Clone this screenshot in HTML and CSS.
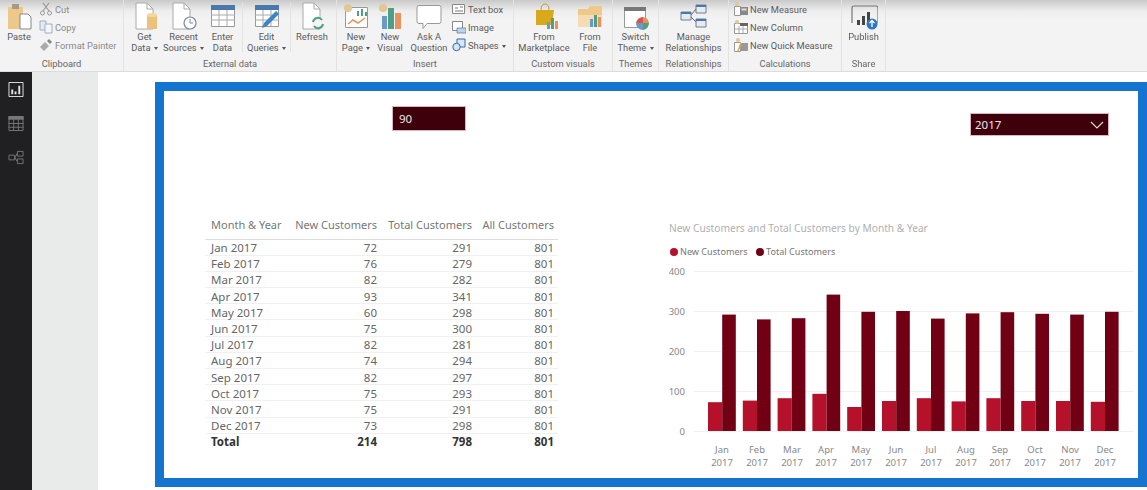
FILE: index.html
```html
<!DOCTYPE html>
<html lang="en">
<head>
    <meta charset="UTF-8">
    <meta name="viewport" content="width=device-width, initial-scale=1.0">
    <title>Power BI Desktop</title>
    <link rel="stylesheet" href="styles.css">
</head>
<body>
    <!-- Ribbon -->
    <div class="ribbon">
        <div class="group group-clipboard">
            <div class="tools">
                <div class="btn btn-paste">
                    <svg class="icon" viewBox="0 0 28 28"><path d="M3 5h15v22H3z" fill="#ecc98a"/><path d="M7 2h7v5H7z" fill="#a89a80"/><path d="M15 12h8l3 3v12H15z" fill="#fff" stroke="#888"/></svg>
                    <span>Paste</span>
                </div>
                <div class="list">
                    <div class="list-item muted">
                        <svg class="mini" viewBox="0 0 14 14"><path d="M4 1l6 8M10 1L4 9" stroke="#999" stroke-width="1.2" fill="none"/><circle cx="3.500" cy="11" r="2" fill="none" stroke="#999"/><circle cx="10.500" cy="11" r="2" fill="none" stroke="#999"/></svg>
                        <span>Cut</span>
                    </div>
                    <div class="list-item muted">
                        <svg class="mini" viewBox="0 0 14 14"><path d="M1 1h6v9H1z" fill="#e4eaf0" stroke="#9db0c4"/><path d="M6 4h7v9H6z" fill="#f4f6f8" stroke="#9db0c4"/></svg>
                        <span>Copy</span>
                    </div>
                    <div class="list-item muted">
                        <svg class="mini" viewBox="0 0 14 14"><path d="M1 9l5-5 4 4-5 5z" fill="#aaa"/><path d="M8 3l2-2 3 3-2 2z" fill="#888"/></svg>
                        <span>Format Painter</span>
                    </div>
                </div>
            </div>
            <div class="group-name">Clipboard</div>
        </div>

        <div class="group group-data">
            <div class="tools">
                <div class="btn btn-get">
                    <svg class="icon" viewBox="0 0 28 28"><path d="M5 1h11l6 6v20H5z" fill="#fff" stroke="#aaa"/><path d="M16 1v6h6" fill="none" stroke="#aaa"/><path d="M16 13h10v14H16z" fill="#ecc27a"/><ellipse cx="21" cy="13" rx="5" ry="2" fill="#f3d9a0"/></svg>
                    <span>Get<br>Data <i class="caret"></i></span>
                </div>
                <div class="btn btn-recent">
                    <svg class="icon" viewBox="0 0 28 28"><path d="M3 1h11l6 6v20H3z" fill="#fff" stroke="#aaa"/><path d="M14 1v6h6" fill="none" stroke="#aaa"/><circle cx="20" cy="21" r="6" fill="#fff" stroke="#7a8a9a" stroke-width="1.200"/><path d="M20 17v4h3" fill="none" stroke="#7a8a9a"/></svg>
                    <span>Recent<br>Sources <i class="caret"></i></span>
                </div>
                <div class="btn btn-enter">
                    <svg class="icon" viewBox="0 0 28 28"><path d="M2.500 3.500h23v21h-23z" fill="#fff" stroke="#999"/><path d="M2 3h24v5H2z" fill="#4a78ad"/><path d="M2 13h24M2 18h24M10 8v16M18 8v16" stroke="#aaa" fill="none"/></svg>
                    <span>Enter<br>Data</span>
                </div>
                <div class="sep"></div>
                <div class="btn btn-edit">
                    <svg class="icon" viewBox="0 0 28 28"><path d="M2.500 3.500h23v21h-23z" fill="#fff" stroke="#999"/><path d="M2 3h24v5H2z" fill="#4a78ad"/><path d="M2 13h24M2 18h24M10 8v16M18 8v16" stroke="#aaa" fill="none"/><path d="M9 26l2-5 12-12 3 3-12 12z" fill="#3d86c6"/></svg>
                    <span>Edit<br>Queries <i class="caret"></i></span>
                </div>
                <div class="sep"></div>
                <div class="btn btn-refresh">
                    <svg class="icon" viewBox="0 0 28 28"><path d="M5 1h11l6 6v20H5z" fill="#fff" stroke="#aaa"/><path d="M16 1v6h6" fill="none" stroke="#aaa"/><circle cx="20" cy="21" r="6" fill="#f4f4f4"/><path d="M15 20a5 5 0 0 1 9-2M25 22a5 5 0 0 1-9 2" fill="none" stroke="#4f9e86" stroke-width="2"/></svg>
                    <span>Refresh</span>
                </div>
            </div>
            <div class="group-name">External data</div>
        </div>

        <div class="group group-insert">
            <div class="tools">
                <div class="btn btn-page">
                    <svg class="icon" viewBox="0 0 28 28"><path d="M3.500 5.500h22v20h-22z" fill="#fff" stroke="#999"/><circle cx="6" cy="6" r="4" fill="#e3c691"/><path d="M15 14v-5h2v5zM19 14v-7h2v7zM23 14v-4h2v4z" fill="#4f9e86"/><path d="M6 22l5-4 5 3 7-5" fill="none" stroke="#e8935a" stroke-width="1.500"/></svg>
                    <span>New<br>Page <i class="caret"></i></span>
                </div>
                <div class="btn btn-visual">
                    <svg class="icon" viewBox="0 0 28 28"><circle cx="7" cy="6" r="4" fill="#e3c691"/><path d="M6 14h5v13H6z" fill="#6a9bc3"/><path d="M12 6h6v21h-6z" fill="#4f9e86"/><path d="M19 11h6v16h-6z" fill="#e8935a"/></svg>
                    <span>New<br>Visual</span>
                </div>
                <div class="btn btn-ask">
                    <svg class="icon" viewBox="0 0 28 28"><path d="M2 5.500q0-2 2-2h20q2 0 2 2v14q0 2-2 2H12l-4 5v-5H4q-2 0-2-2z" fill="#fff" stroke="#999"/></svg>
                    <span>Ask A<br>Question</span>
                </div>
                <div class="list list-insert">
                    <div class="list-item">
                        <svg class="mini" viewBox="0 0 14 14"><path d="M.5 2.500h12v9H.5z" fill="#fff" stroke="#888"/><path d="M3 6h3M3 9h8M8 5h3" stroke="#777" fill="none"/></svg>
                        <span>Text box</span>
                    </div>
                    <div class="list-item">
                        <svg class="mini" viewBox="0 0 14 14"><path d="M.5 1.500h10v9H.5z" fill="#fff" stroke="#888"/><path d="M5 8h9v5H5z" fill="#bcd3e8" stroke="#4a78ad" stroke-width=".7"/></svg>
                        <span>Image</span>
                    </div>
                    <div class="list-item">
                        <svg class="mini" viewBox="0 0 14 14"><path d="M5 1h8v8H5z" fill="#d8e6f2" stroke="#2e6da8"/><circle cx="4.500" cy="9" r="3.700" fill="#d8e6f2" stroke="#2e6da8"/></svg>
                        <span>Shapes <i class="caret"></i></span>
                    </div>
                </div>
            </div>
            <div class="group-name">Insert</div>
        </div>

        <div class="group group-custom">
            <div class="tools">
                <div class="btn btn-market">
                    <svg class="icon" viewBox="0 0 28 28"><path d="M6 8h18l-2 15H6z" fill="#d9a91c"/><path d="M11 8q0-6 4-6t4 6" fill="none" stroke="#c49a3a"/><path d="M17 20h3v7h-3z" fill="#6a9bc3"/><path d="M21 16h3v11h-3z" fill="#4f9e86"/><path d="M25 19h3v8h-3z" fill="#e8935a"/></svg>
                    <span>From<br>Marketplace</span>
                </div>
                <div class="btn btn-file">
                    <svg class="icon" viewBox="0 0 28 28"><path d="M2 7h10l2-3h12v21H2z" fill="#efc98a"/><path d="M2 13h24v12H2z" fill="#f5dcb2"/><path d="M14 17h3v8h-3z" fill="#6a9bc3"/><path d="M18 13h3v12h-3z" fill="#4f9e86"/><path d="M22 15h3v10h-3z" fill="#e8935a"/></svg>
                    <span>From<br>File</span>
                </div>
            </div>
            <div class="group-name">Custom visuals</div>
        </div>

        <div class="group group-themes">
            <div class="tools">
                <div class="btn btn-theme">
                    <svg class="icon" viewBox="0 0 28 28"><path d="M2.500 5.500h21v20h-21z" fill="#fff" stroke="#999"/><path d="M2 5h22v4H2z" fill="#777"/><path d="M21 15a7 7 0 0 1 6 6h-6z" fill="#e8935a"/><path d="M21 28a7 7 0 0 0 6-7h-6z" fill="#4f9e86"/><path d="M21 28a7 7 0 0 1-7-7h7z" fill="#6a9bc3"/><path d="M14 21a7 7 0 0 1 7-6v6z" fill="#d9534f"/></svg>
                    <span>Switch<br>Theme <i class="caret"></i></span>
                </div>
            </div>
            <div class="group-name">Themes</div>
        </div>

        <div class="group group-rel">
            <div class="tools">
                <div class="btn btn-manage">
                    <svg class="icon" viewBox="0 0 28 28"><path d="M16 3h10v8H16zM1 10h10v8H1zM16 17h10v8H16z" fill="#e6ebf0" stroke="#6f7f90"/><path d="M16 3h10v2H16zM1 10h10v2H1zM16 17h10v2H16z" fill="#4a78ad"/><path d="M11 13l5-6M11 15l5 5" stroke="#666" fill="none"/></svg>
                    <span>Manage<br>Relationships</span>
                </div>
            </div>
            <div class="group-name">Relationships</div>
        </div>

        <div class="group group-calc">
            <div class="tools">
                <div class="list list-calc">
                    <div class="list-item">
                        <svg class="mini" viewBox="0 0 14 14"><path d="M.5 4.500h6v9h-6z" fill="#fff" stroke="#999"/><path d="M6 5h8v8H6z" fill="#888"/><path d="M7.500 6.500h5v2h-5z" fill="#ddd"/><circle cx="3" cy="2" r="2" fill="#e3c691"/></svg>
                        <span>New Measure</span>
                    </div>
                    <div class="list-item">
                        <svg class="mini" viewBox="0 0 14 14"><path d="M.5 3.500h13v10H.5z" fill="#fff" stroke="#999"/><path d="M6 3h8v3H6z" fill="#666"/><path d="M5 6v7M9 6v7M1 9h12" stroke="#aaa" fill="none"/><circle cx="3" cy="2" r="2" fill="#e3c691"/></svg>
                        <span>New Column</span>
                    </div>
                    <div class="list-item">
                        <svg class="mini" viewBox="0 0 14 14"><path d="M.5 4.500h6v9h-6z" fill="#fff" stroke="#999"/><path d="M7 5h7v8H7z" fill="#999"/><path d="M4 13l3-8" stroke="#e3a84a" stroke-width="1.500"/><circle cx="4" cy="2" r="2" fill="#e3c691"/></svg>
                        <span>New Quick Measure</span>
                    </div>
                </div>
            </div>
            <div class="group-name">Calculations</div>
        </div>

        <div class="group group-share">
            <div class="tools">
                <div class="btn btn-publish">
                    <svg class="icon" viewBox="0 0 28 28"><path d="M2 21V6q0-2 2-2h22q2 0 2 2v15" fill="none" stroke="#777" stroke-width="1.200"/><path d="M7 18h3v5H7zM12 14h3v9h-3zM17 10h3v13h-3z" fill="#444"/><circle cx="22" cy="22" r="5.500" fill="#2f78bd"/><path d="M22 25v-6M19.500 21l2.500-2.500 2.500 2.500" fill="none" stroke="#fff" stroke-width="1.300"/></svg>
                    <span>Publish</span>
                </div>
            </div>
            <div class="group-name">Share</div>
        </div>
    </div>

    <div class="main">
        <!-- Left rail -->
        <div class="rail">
            <svg class="rail-icon" viewBox="0 0 16 16"><path d="M.5.500h15v15H.5z" fill="none" stroke="#e8e8e8"/><path d="M3 8h2v5H3zM6.500 10h2v3h-2zM10.500 4h2v9h-2z" fill="#e8e8e8"/></svg>
            <svg class="rail-icon" viewBox="0 0 16 16"><path d="M.5.500h15v15H.5z" fill="none" stroke="#77767a"/><path d="M0 0h16v4H0z" fill="#77767a"/><path d="M0 8h16M0 12h16M5.500 4v12M10.500 4v12" stroke="#77767a" fill="none"/></svg>
            <svg class="rail-icon" viewBox="0 0 16 16"><path d="M.5 5.500h6v5h-6zM9.500 1.500h6v5h-6zM9.500 9.500h6v5h-6z" fill="none" stroke="#77767a"/><path d="M7 8l2-4M7 8l2 4" stroke="#77767a" fill="none"/></svg>
        </div>
        <div class="gutter"></div>

        <!-- Report page -->
        <div class="page">
            <div class="frame">
                <div class="col-left">
                    <div class="card-value">90</div>

                    <table class="matrix">
                        <thead>
                            <tr><th>Month &amp; Year</th><th>New Customers</th><th>Total Customers</th><th>All Customers</th></tr>
                        </thead>
                        <tbody>
                            <tr><td>Jan 2017</td><td>72</td><td>291</td><td>801</td></tr>
                            <tr><td>Feb 2017</td><td>76</td><td>279</td><td>801</td></tr>
                            <tr><td>Mar 2017</td><td>82</td><td>282</td><td>801</td></tr>
                            <tr><td>Apr 2017</td><td>93</td><td>341</td><td>801</td></tr>
                            <tr><td>May 2017</td><td>60</td><td>298</td><td>801</td></tr>
                            <tr><td>Jun 2017</td><td>75</td><td>300</td><td>801</td></tr>
                            <tr><td>Jul 2017</td><td>82</td><td>281</td><td>801</td></tr>
                            <tr><td>Aug 2017</td><td>74</td><td>294</td><td>801</td></tr>
                            <tr><td>Sep 2017</td><td>82</td><td>297</td><td>801</td></tr>
                            <tr><td>Oct 2017</td><td>75</td><td>293</td><td>801</td></tr>
                            <tr><td>Nov 2017</td><td>75</td><td>291</td><td>801</td></tr>
                            <tr><td>Dec 2017</td><td>73</td><td>298</td><td>801</td></tr>
                        </tbody>
                        <tfoot>
                            <tr><td>Total</td><td>214</td><td>798</td><td>801</td></tr>
                        </tfoot>
                    </table>
                </div>

                <div class="col-right">
                    <div class="slicer">
                        <span>2017</span>
                        <svg class="chevron" viewBox="0 0 14 8"><path d="M1 1l6 6 6-6" fill="none" stroke="#e6dcdc" stroke-width="1.100"/></svg>
                    </div>

                    <!-- Chart: y = 216 - value * 0.4 -->
                    <svg class="chart" width="474" height="260" viewBox="0 0 474 260">
                        <text class="chart-title" x="9" y="17">New Customers and Total Customers by Month &amp; Year</text>

                        <circle cx="14" cy="37" r="4" fill="#b5112b"/>
                        <text class="legend" x="20" y="40">New Customers</text>
                        <circle cx="100" cy="37" r="4" fill="#720015"/>
                        <text class="legend" x="106" y="40">Total Customers</text>

                        <g class="grid">
                            <path d="M34 56.500h440M34 96.500h440M34 136.500h440M34 176.500h440M34 216.500h440"/>
                        </g>
                        <g class="axis-y">
                            <text x="25" y="60">400</text>
                            <text x="25" y="100">300</text>
                            <text x="25" y="140">200</text>
                            <text x="25" y="180">100</text>
                            <text x="25" y="220">0</text>
                        </g>

                        <g class="bars-new">
                            <rect x="48" y="187.200" width="14.200" height="28.800"/>
                            <rect x="82.800" y="185.600" width="14.200" height="30.400"/>
                            <rect x="117.600" y="183.200" width="14.200" height="32.800"/>
                            <rect x="152.400" y="178.800" width="14.200" height="37.200"/>
                            <rect x="187.200" y="192" width="14.200" height="24"/>
                            <rect x="222" y="186" width="14.200" height="30"/>
                            <rect x="256.800" y="183.200" width="14.200" height="32.800"/>
                            <rect x="291.600" y="186.400" width="14.200" height="29.600"/>
                            <rect x="326.400" y="183.200" width="14.200" height="32.800"/>
                            <rect x="361.200" y="186" width="14.200" height="30"/>
                            <rect x="396" y="186" width="14.200" height="30"/>
                            <rect x="430.800" y="186.800" width="14.200" height="29.200"/>
                        </g>
                        <g class="bars-total">
                            <rect x="62.200" y="99.600" width="13.600" height="116.400"/>
                            <rect x="97" y="104.400" width="13.600" height="111.600"/>
                            <rect x="131.800" y="103.200" width="13.600" height="112.800"/>
                            <rect x="166.600" y="79.600" width="13.600" height="136.400"/>
                            <rect x="201.400" y="96.800" width="13.600" height="119.200"/>
                            <rect x="236.200" y="96" width="13.600" height="120"/>
                            <rect x="271" y="103.600" width="13.600" height="112.400"/>
                            <rect x="305.800" y="98.400" width="13.600" height="117.600"/>
                            <rect x="340.600" y="97.200" width="13.600" height="118.800"/>
                            <rect x="375.400" y="98.800" width="13.600" height="117.200"/>
                            <rect x="410.200" y="99.600" width="13.600" height="116.400"/>
                            <rect x="445" y="96.800" width="13.600" height="119.200"/>
                        </g>

                        <g class="axis-x">
                            <text x="62" y="238">Jan</text><text x="62" y="251">2017</text>
                            <text x="97" y="238">Feb</text><text x="97" y="251">2017</text>
                            <text x="132" y="238">Mar</text><text x="132" y="251">2017</text>
                            <text x="166" y="238">Apr</text><text x="166" y="251">2017</text>
                            <text x="201" y="238">May</text><text x="201" y="251">2017</text>
                            <text x="236" y="238">Jun</text><text x="236" y="251">2017</text>
                            <text x="271" y="238">Jul</text><text x="271" y="251">2017</text>
                            <text x="306" y="238">Aug</text><text x="306" y="251">2017</text>
                            <text x="340" y="238">Sep</text><text x="340" y="251">2017</text>
                            <text x="375" y="238">Oct</text><text x="375" y="251">2017</text>
                            <text x="410" y="238">Nov</text><text x="410" y="251">2017</text>
                            <text x="445" y="238">Dec</text><text x="445" y="251">2017</text>
                        </g>
                    </svg>
                </div>
            </div>
        </div>
    </div>
</body>
</html>
```

FILE: styles.css
```css
/* General styles */
* {
    margin: 0;
    padding: 0;
    box-sizing: border-box;
}

body {
    font-family: "Noto Sans", "Open Sans", Arial, sans-serif;
    background-color: #fff;
    height: 100vh;
    display: flex;
    flex-direction: column;
    overflow: hidden;
    filter: blur(0.35px);
}

/* Ribbon */
.ribbon {
    display: flex;
    height: 72px;
    flex-shrink: 0;
    background: linear-gradient(#c9c9c9, #eeeeee 11px, #f3f3f3 20px);
    border-bottom: 1px solid #dcdcdc;
    color: #5a5a5a;
    font-family: Roboto, "Noto Sans", Arial, sans-serif;
    font-size: 9.300px;
    line-height: 11px;
}

.group {
    display: flex;
    flex-direction: column;
    flex-shrink: 0;
    border-right: 1px solid #e2e2e2;
}

.tools {
    display: flex;
    height: 58px;
    padding-top: 2px;
}

.group-name {
    text-align: center;
    color: #666;
    line-height: 11px;
}

.group-clipboard { width: 124px; }
.group-data { width: 213px; }
.group-insert { width: 177px; }
.group-custom { width: 99px; }
.group-themes { width: 46px; }
.group-rel { width: 70px; }
.group-calc { width: 113px; }
.group-share { width: 44px; }

.btn {
    display: flex;
    flex-direction: column;
    align-items: center;
    flex-shrink: 0;
    text-align: center;
    white-space: nowrap;
}

.icon {
    width: 28px;
    height: 28px;
    margin-bottom: 1px;
}

.caret {
    display: inline-block;
    width: 0;
    height: 0;
    margin: 0 0 1px 1px;
    border: 2.500px solid transparent;
    border-top: 3px solid #555;
    border-bottom: 0;
}

.sep {
    width: 1px;
    height: 50px;
    flex-shrink: 0;
    background-color: #e2e2e2;
}

.btn-paste { width: 38px; }
.btn-get { width: 39px; margin-left: 1px; }
.btn-recent { width: 39px; }
.btn-enter { width: 39px; }
.btn-edit { width: 47px; }
.btn-refresh { width: 42px; }
.btn-page { width: 38px; }
.btn-visual { width: 30px; }
.btn-ask { width: 48px; }
.btn-market { width: 60px; }
.btn-file { width: 32px; }
.btn-theme { width: 45px; }
.btn-manage { width: 69px; }
.btn-publish { width: 43px; }

.list {
    display: flex;
    flex-direction: column;
    gap: 4px;
    margin-left: 1px;
}

.list-insert { margin-left: -1px; }
.list-calc { margin-left: 5px; }

.list-item {
    display: flex;
    align-items: center;
    gap: 2px;
    height: 14px;
    white-space: nowrap;
}

.list-item.muted {
    color: #8a8a8a;
}

.mini {
    width: 14px;
    height: 14px;
    flex-shrink: 0;
}

/* Layout below the ribbon */
.main {
    display: flex;
    flex: 1;
    min-height: 0;
}

.rail {
    width: 32px;
    flex-shrink: 0;
    background-color: #201f22;
    display: flex;
    flex-direction: column;
    align-items: center;
    gap: 19px;
    padding-top: 10px;
}

.rail-icon {
    width: 16px;
    height: 15px;
}

.gutter {
    width: 66px;
    flex-shrink: 0;
    background-color: #e9eaea;
}

.page {
    flex: 1;
    padding: 10px 0 0 57px;
    background-color: #fff;
}

.frame {
    display: flex;
    height: 405px;
    border: 9px solid #1574d0;
}

.col-left {
    width: 496px;
    padding-left: 41px;
    flex-shrink: 0;
}

.col-right {
    flex: 1;
}

/* Slicers */
.card-value {
    width: 74px;
    height: 25px;
    margin: 15px 0 0 187px;
    padding-left: 6px;
    background-color: #3e000b;
    border: 1px solid #d8b8be;
    color: #efe5e5;
    font-size: 11.500px;
    line-height: 23px;
}

.slicer {
    display: flex;
    justify-content: space-between;
    align-items: center;
    width: 139px;
    height: 23px;
    margin: 22px 0 0 310px;
    padding: 0 3px 0 4px;
    background-color: #3e000b;
    border: 1px solid #d8b8be;
    color: #efe5e5;
    font-size: 11.500px;
}

.chevron {
    width: 14px;
    height: 8px;
    margin-right: 1px;
}

/* Table */
.matrix {
    width: 353px;
    margin-top: 84px;
    border-collapse: collapse;
    table-layout: fixed;
    font-size: 11.500px;
    color: #666;
}

.matrix th,
.matrix td {
    padding: 0 4px 0 6px;
    font-weight: normal;
    text-align: right;
    white-space: nowrap;
}

.matrix th {
    padding-bottom: 4px;
    font-size: 11px;
    color: #777;
}

.matrix th:first-child,
.matrix td:first-child {
    width: 83px;
    text-align: left;
}

.matrix th:nth-child(2) { width: 93px; }
.matrix th:nth-child(3) { width: 95px; }

.matrix thead tr {
    height: 24px;
    border-bottom: 1px solid #ddd;
}

.matrix tbody tr {
    height: 16.200px;
    border-bottom: 1px solid #f0f0f0;
}

.matrix tbody td {
    padding-top: 1px;
    line-height: 13px;
}

.matrix tfoot tr {
    border-top: 1px solid #ccc;
}

.matrix tfoot td {
    line-height: 15px;
    font-weight: bold;
    color: #333;
}

/* Chart */
.chart {
    display: block;
    margin-top: 79px;
    overflow: visible;
}

.chart-title {
    font-size: 10.200px;
    fill: #b0b0b0;
}

.legend {
    font-size: 9.100px;
    fill: #777;
}

.grid path {
    stroke: #f1f1f1;
    fill: none;
}

.axis-y text {
    font-size: 9.500px;
    fill: #888;
    text-anchor: end;
}

.axis-x text {
    font-size: 9.500px;
    fill: #888;
    text-anchor: middle;
}

.bars-new rect {
    fill: #b5112b;
}

.bars-total rect {
    fill: #720015;
}
```
